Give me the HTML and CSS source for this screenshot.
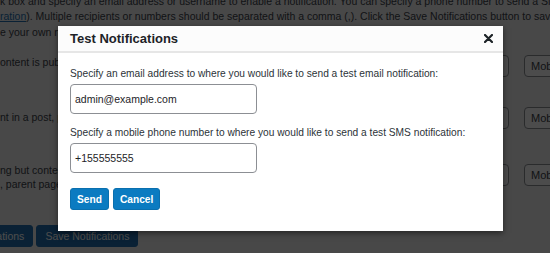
FILE: index.html
```html
<!DOCTYPE html>
<html>
<head>
<meta charset="utf-8">
<link rel="stylesheet" href="styles.css">
</head>
<body>
<div class="page">
  <div class="intro">
    <p class="line l1">k box and specify an email address or username to enable a notification. You can specify a phone number to send a SMS notification.</p>
    <p class="line l2"><a href="#">ration</a>). Multiple recipients or numbers should be separated with a comma (,). Click the Save Notifications button to save the changes.</p>
    <p class="line l3">e your own notifications for the events below.</p>
  </div>
  <div class="rows">
    <div class="row r1">
      <div class="desc"><span>ontent is published</span></div>
      <div class="fields"><span class="email-box"></span><span class="mobile-box">Mobile</span></div>
    </div>
    <div class="row r2">
      <div class="desc"><span>nt in a post, page</span></div>
      <div class="fields"><span class="email-box"></span><span class="mobile-box">Mobile</span></div>
    </div>
    <div class="row r3">
      <div class="desc"><span>ng but content</span><span>, parent page</span></div>
      <div class="fields"><span class="email-box"></span><span class="mobile-box">Mobile</span></div>
    </div>
  </div>
  <div class="actions">
    <button class="wp-btn first">Test Notifications</button>
    <button class="wp-btn">Save Notifications</button>
  </div>
</div>
<div class="overlay"></div>
<div class="modal">
  <div class="modal-head">
    <h2 class="modal-title">Test Notifications</h2>
    <span class="close"><svg width="9" height="9" viewBox="0 0 9 9"><path d="M1 1L8 8M8 1L1 8" stroke="#1d2327" stroke-width="2.2" stroke-linecap="round"/></svg></span>
  </div>
  <div class="modal-body">
    <label class="label">Specify an email address to where you would like to send a test email notification:</label>
    <div class="input">admin@example.com</div>
    <label class="label second">Specify a mobile phone number to where you would like to send a test SMS notification:</label>
    <div class="input">+155555555</div>
    <div class="buttons">
      <button class="btn">Send</button>
      <button class="btn">Cancel</button>
    </div>
  </div>
</div>
</body>
</html>
```

FILE: styles.css
```css
html, body {
  margin: 0;
  padding: 0;
}
body {
  width: 550px;
  height: 253px;
  overflow: hidden;
  background: #f0f0f1;
  font-family: "Liberation Sans", Arial, sans-serif;
  color: #3c434a;
  position: relative;
}
.page {
  font-size: 10.5px;
}
.intro {
  margin-top: -6px;
}
.line {
  margin: 0;
  white-space: nowrap;
  line-height: 15px;
}
.line a {
  color: #2271b1;
  text-decoration: underline;
}
.l3 {
  margin-top: 1px;
}
.rows {
  display: flex;
  flex-direction: column;
  margin-top: 15px;
}
.row {
  display: flex;
  justify-content: space-between;
  align-items: flex-start;
}
.r1 { height: 52px; }
.r2 { height: 57px; }
.r3 { height: 57px; }
.desc {
  display: flex;
  flex-direction: column;
  line-height: 14px;
  white-space: nowrap;
}
.r1 .desc { padding-top: 0; }
.r2 .desc { padding-top: 3px; }
.r3 .desc { margin-top: -1px; }
.fields {
  display: flex;
  gap: 15px;
  margin-right: -42px;
}
.email-box, .mobile-box {
  display: block;
  height: 20px;
  border: 1px solid #8c8f94;
  border-radius: 4px;
  background: #fff;
  box-sizing: content-box;
}
.email-box { width: 120px; }
.mobile-box {
  width: 60px;
  padding-left: 6px;
  line-height: 20px;
  font-size: 11px;
  color: #3c434a;
}
.actions {
  display: flex;
  gap: 3px;
  margin-left: -64px;
  margin-top: 4px;
}
.wp-btn {
  font-family: inherit;
  font-size: 10.5px;
  height: 22px;
  padding: 0 8px;
  border: 1px solid #2271b1;
  border-radius: 3px;
  background: #2271b1;
  color: #fff;
}
.overlay {
  position: absolute;
  inset: 0;
  background: rgba(0, 0, 0, 0.7);
}
.modal {
  position: absolute;
  left: 58px;
  top: 26px;
  width: 445px;
  height: 205px;
  background: #fff;
  box-shadow: 0 2px 6px rgba(0, 0, 0, 0.5);
  display: flex;
  flex-direction: column;
}
.modal-head {
  height: 25px;
  background: #fcfcfc;
  border-bottom: 2px solid #e6e6e6;
  display: flex;
  align-items: center;
  justify-content: space-between;
  padding: 0 10px 0 12px;
}
.modal-title {
  margin: 0;
  font-size: 13px;
  font-weight: bold;
  color: #1d2327;
  line-height: 16px;
}
.close {
  display: flex;
  margin-top: -1px;
}
.modal-body {
  padding: 14px 12px 0 12px;
  display: flex;
  flex-direction: column;
  align-items: flex-start;
}
.label {
  font-size: 10.2px;
  line-height: 14px;
  color: #2c3338;
  white-space: nowrap;
}
.label.second {
  margin-top: 12px;
}
.input {
  margin-top: 3px;
  width: 181px;
  height: 28px;
  border: 1px solid #8c8f94;
  border-radius: 4px;
  box-sizing: content-box;
  padding: 0 0 0 4px;
  font-size: 10.5px;
  line-height: 28px;
  color: #1d2327;
}
.buttons {
  display: flex;
  gap: 4px;
  margin-top: 15px;
}
.btn {
  font-family: inherit;
  font-size: 10.2px;
  font-weight: bold;
  height: 22px;
  padding: 0 6px;
  border: 1px solid #0a6fae;
  border-radius: 3px;
  background: #0b7bc1;
  color: #fff;
}
```
